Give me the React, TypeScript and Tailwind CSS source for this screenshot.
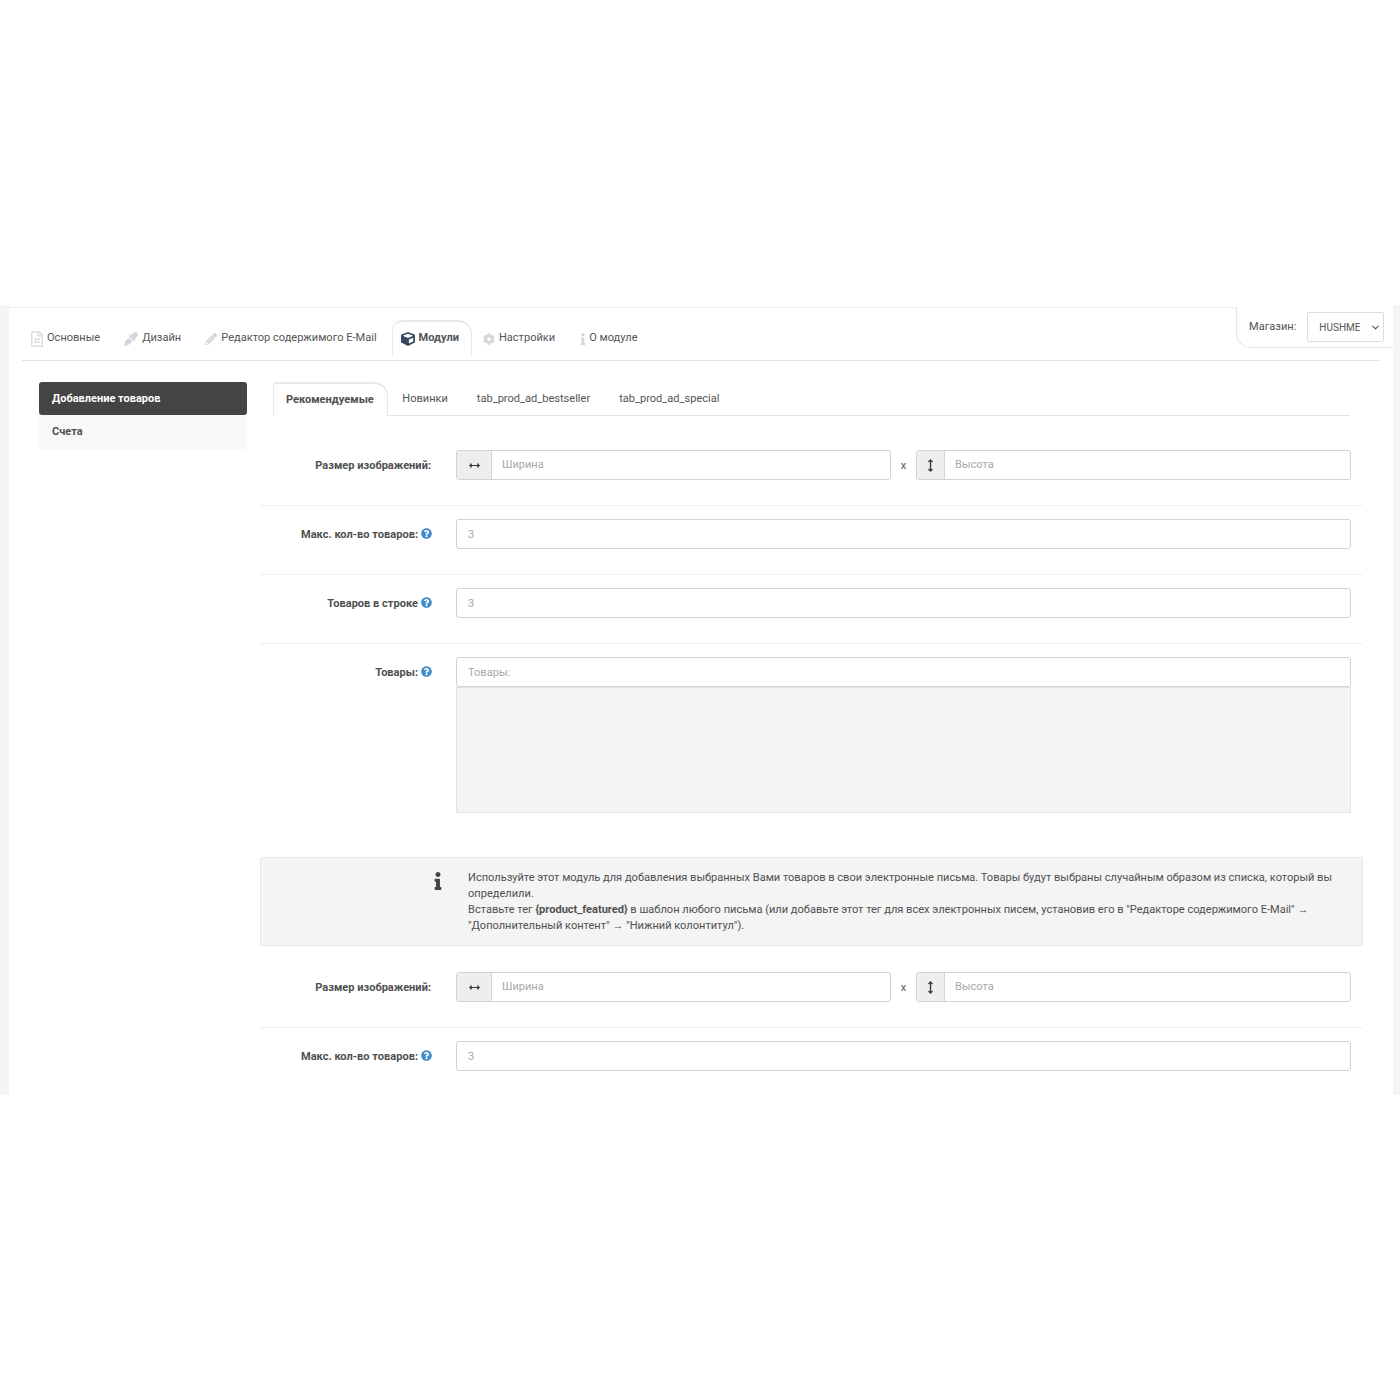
import { FaCog, FaCube, FaEyeDropper, FaInfo, FaPencilAlt, FaQuestionCircle, FaRegFileAlt } from "react-icons/fa";
import { ChevronDown } from "lucide-react";

function Help() {
  return <FaQuestionCircle className="ml-[3px] inline-block text-[11px] text-[#428bca] align-[-1px]" />;
}

function ArrowH() {
  return (
    <svg width="13" height="7" viewBox="0 0 13 7" fill="none" stroke="#3a3a3a" strokeWidth="1.2">
      <path d="M1 3.5h11" />
      <path d="M3 1.5v4M10 1.5v4" strokeWidth="1.6" />
    </svg>
  );
}

function ArrowV() {
  return (
    <svg width="7" height="13" viewBox="0 0 7 13" fill="none" stroke="#3a3a4a" strokeWidth="1.4">
      <path d="M3.5 1v11" />
      <path d="M1.5 3 3.5 1l2 2M1.5 10l2 2 2-2" />
    </svg>
  );
}

function Row({ label, help, children, line = true }: { label: string; help?: boolean; children: React.ReactNode; line?: boolean }) {
  return (
    <div className={`flex pt-[13px] pb-[25px] ${line ? "border-b border-[#f0f0f0]" : ""}`}>
      <label className={`w-[172px] shrink-0 h-[30px] pt-px leading-[30px] text-right text-[11.06px] font-bold text-[#4f4f4f] ${help ? "" : "pr-px"}`}>
        {label}
        {help && <Help />}
      </label>
      <div className="ml-[24px] flex-1 mr-[12px]">{children}</div>
    </div>
  );
}

function TextInput({ placeholder }: { placeholder: string }) {
  return (
    <input
      readOnly
      placeholder={placeholder}
      className="block w-full h-[30px] rounded-[3px] border border-[#d2d2d2] bg-white px-[11px] pt-px text-[11.06px] placeholder:text-[#a8a8a8] outline-none"
    />
  );
}

function SizeInputs() {
  return (
    <div className="flex items-center">
      <div className="flex w-[435px] h-[30px] rounded-[3px] border border-[#d2d2d2] overflow-hidden">
        <span className="flex w-[35px] items-center justify-center border-r border-[#d6d6d6] bg-[#eeeeee]">
          <ArrowH />
        </span>
        <input readOnly placeholder="Ширина" className="flex-1 min-w-0 px-[10px] pt-px text-[11.06px] placeholder:text-[#a8a8a8] outline-none" />
      </div>
      <span className="w-[25px] text-center text-[11px] text-[#555] pt-[2px]">x</span>
      <div className="flex flex-1 h-[30px] rounded-[3px] border border-[#d2d2d2] overflow-hidden">
        <span className="flex w-[28px] items-center justify-center border-r border-[#d6d6d6] bg-[#eeeeee]">
          <ArrowV />
        </span>
        <input readOnly placeholder="Высота" className="flex-1 min-w-0 px-[10px] pt-px text-[11.06px] placeholder:text-[#a8a8a8] outline-none" />
      </div>
    </div>
  );
}

export default function App() {
  return (
    <div className="bg-white font-[Roboto,sans-serif] text-[#555]">
      <div className="h-[305px]" />
      <div className="flex h-[790px] overflow-hidden">
        <div className="w-[9px] shrink-0 bg-[#f5f5f5]" />

        <div className="relative flex-1 pt-[2px] min-w-0">
          <div className="border-t border-[#eeeeee] px-[13px]">
            {/* верхние вкладки */}
            <div className="flex items-start h-[53px] pt-[12px] border-b border-[#e4e4e4] text-[11.06px]">
              <div className="flex h-[35px] items-center pt-[2px] pl-3 -ml-[3px] pr-[12px]">
                <FaRegFileAlt className="-ml-[2px] mr-[2px] text-[16px] text-[#dcdcdc]" />
                <span>Основные</span>
              </div>
              <div className="flex h-[35px] items-center pt-[2px] px-3">
                <FaEyeDropper className="mr-[4px] text-[14px] text-[#d5d5d5]" />
                <span>Дизайн</span>
              </div>
              <div className="flex h-[35px] items-center pt-[2px] px-3">
                <FaPencilAlt className="mr-[4px] text-[12px] text-[#d5d5d5]" />
                <span>Редактор содержимого E-Mail</span>
              </div>
              <div className="ml-[3px] flex h-[35px] items-center rounded-tr-[14px] rounded-tl-[10px] border-t-2 border-x border-[#e8e8e8] pl-[8px] pr-[12px] font-bold">
                <FaCube className="mr-[4px] text-[14px] text-[#34495e]" />
                <span>Модули</span>
              </div>
              <div className="flex h-[35px] items-center pt-[2px] pl-[11px] pr-3">
                <FaCog className="mr-[4px] text-[12px] text-[#d5d5d5]" />
                <span>Настройки</span>
              </div>
              <div className="flex h-[35px] items-center pt-[2px] pl-[10px] pr-3">
                <FaInfo className="text-[12px] text-[#d5d5d5]" />
                <span>О модуле</span>
              </div>
            </div>

            <div className="flex pl-[17px] pr-[17px] pt-[21px]">
              {/* левое меню */}
              <div className="w-[208px] shrink-0 text-[11px] font-bold">
                <div className="flex h-[33px] items-center pt-px rounded-[3px] bg-[#444444] px-[13px] text-white">Добавление товаров</div>
                <div className="flex h-[34px] items-center pt-px bg-[#f8f8f8] px-[13px] text-[#4f4f4f]">Счета</div>
              </div>

              <div className="ml-[13px] flex-1 min-w-0">
                {/* вкладки */}
                <div className="mx-[13px] flex h-[34px] border-b border-[#e4e4e4] text-[11.06px]">
                  <div className="-mb-px flex h-[34px] items-center rounded-t-[3px] rounded-tr-[14px] border-t-2 border-x border-[#e8e8e8] bg-white pl-[12px] pr-[13px] font-bold text-[#4f4f4f]">
                    Рекомендуемые
                  </div>
                  <div className="flex items-center pt-[2px] px-[14.5px]">Новинки</div>
                  <div className="flex items-center pt-[2px] px-[14.5px]">tab_prod_ad_bestseller</div>
                  <div className="flex items-center pt-[2px] px-[14.5px]">tab_prod_ad_special</div>
                </div>

                <div className="pt-[21px]">
                  <Row label="Размер изображений:">
                    <SizeInputs />
                  </Row>
                  <Row label="Макс. кол-во товаров:" help>
                    <TextInput placeholder="3" />
                  </Row>
                  <Row label="Товаров в строке" help>
                    <TextInput placeholder="3" />
                  </Row>
                  <Row label="Товары:" help line={false}>
                    <TextInput placeholder="Товары:" />
                    <div className="h-[126px] border border-[#e4e4e4] bg-[#f4f4f4]" />
                  </Row>
                </div>

                <div className="mt-[19px] flex rounded-[2px] border border-[#e6e6e6] bg-[#f4f4f4] pt-[12px] pb-[11px] text-[11.06px] leading-[16px] text-[#505050]">
                  <div className="w-[186px] shrink-0 flex justify-end pt-[2px]">
                    <FaInfo className="text-[18px] text-[#444]" />
                  </div>
                  <div className="ml-[21px] flex-1">
                    Используйте этот модуль для добавления выбранных Вами товаров в свои электронные письма. Товары будут выбраны случайным образом из списка, который вы
                    <br />
                    определили.
                    <br />
                    Вставьте тег <b>{"{product_featured}"}</b> в шаблон любого письма (или добавьте этот тег для всех электронных писем, установив его в "Редакторе содержимого E-Mail" →
                    <br />
                    "Дополнительный контент" → "Нижний колонтитул").
                  </div>
                </div>

                <div className="mt-[13px]">
                  <Row label="Размер изображений:">
                    <SizeInputs />
                  </Row>
                  <Row label="Макс. кол-во товаров:" help line={false}>
                    <TextInput placeholder="3" />
                  </Row>
                </div>
              </div>
            </div>
          </div>

          {/* выбор магазина */}
          <div className="absolute right-0 top-[2px] flex h-[41px] w-[157px] items-center rounded-bl-[15px] border-l border-b border-[#e6e6e6] bg-white pl-[12px] text-[11.06px]">
            <span>Магазин:</span>
            <div className="ml-[11px] flex h-[30px] w-[77px] items-center rounded-[2px] border border-[#dcdcdc] pl-[11px] text-[10px]">
              HUSHME
              <ChevronDown className="ml-auto mr-[2px] h-[11px] w-[11px]" strokeWidth={2.5} />
            </div>
          </div>
        </div>

        <div className="w-[7px] shrink-0 bg-[#f5f5f5]" />
      </div>
      <div className="h-[305px]" />
    </div>
  );
}
